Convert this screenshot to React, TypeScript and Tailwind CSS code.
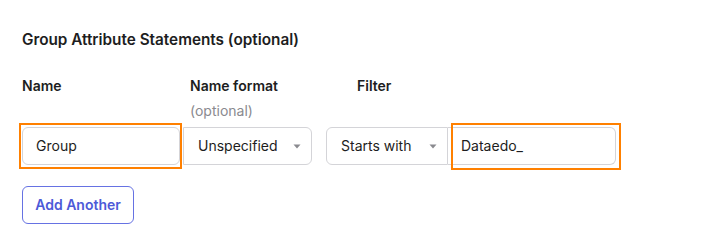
import { ReactNode } from 'react';

function Caret() {
  return (
    <svg width="8" height="5" viewBox="0 0 8 5" className="shrink-0">
      <path d="M0.5 0.5h7L4 4.5z" fill="#8a8a8f" />
    </svg>
  );
}

function Highlight({ children, className }: { children: ReactNode; className: string }) {
  return (
    <div className="relative">
      {children}
      <div className={`pointer-events-none absolute border-2 border-[#ff8000] ${className}`}></div>
    </div>
  );
}

export default function App() {
  return (
    <div className="w-[710px] h-[245px] bg-white pl-[22px] pt-[30px] font-['Inter','Noto_Sans',sans-serif] text-[#1d1d21]">
      <h3 className="text-[15.3px] leading-5 font-semibold">Group Attribute Statements (optional)</h3>

      <div className="mt-[26px] flex">
        <div className="w-[158px] mr-[3px]">
          <div className="h-[51px]">
            <div className="text-sm leading-5 font-semibold">Name</div>
          </div>
          <Highlight className="-left-[3px] -right-[2px] -top-[4px] -bottom-[4px]">
            <div className="h-[38px] border border-[#d4d4d8] rounded-md pl-[13px] flex items-center text-sm">Group</div>
          </Highlight>
        </div>

        <div className="w-[129px] mr-[14px]">
          <div className="h-[51px] pl-[7px]">
            <div className="text-sm leading-5 font-semibold">Name format</div>
            <div className="mt-[5px] text-sm leading-5 text-[#8a8a8f]">(optional)</div>
          </div>
          <div className="h-[38px] border border-[#d4d4d8] rounded-r-md pl-[14px] pr-[10px] flex items-center justify-between text-sm">
            <span>Unspecified</span>
            <Caret />
          </div>
        </div>

        <div>
          <div className="h-[51px] pl-[31px]">
            <div className="text-sm leading-5 font-semibold">Filter</div>
          </div>
          <div className="flex">
            <div className="w-[122px] h-[38px] border border-[#d4d4d8] rounded-l-md pl-[14px] pr-[10px] flex items-center justify-between text-sm">
              <span>Starts with</span>
              <Caret />
            </div>
            <Highlight className="left-[3px] -right-[5px] -top-[4px] -bottom-[5px]">
              <div className="w-[168px] h-[38px] border border-l-0 border-[#d4d4d8] rounded-r-md pl-[13px] flex items-center text-sm">Dataedo_</div>
            </Highlight>
          </div>
        </div>
      </div>

      <button className="mt-[21px] h-[38px] w-[112px] border border-[#6672e3] rounded-md text-sm font-semibold text-[#4d5ad8]">
        Add Another
      </button>
    </div>
  );
}
